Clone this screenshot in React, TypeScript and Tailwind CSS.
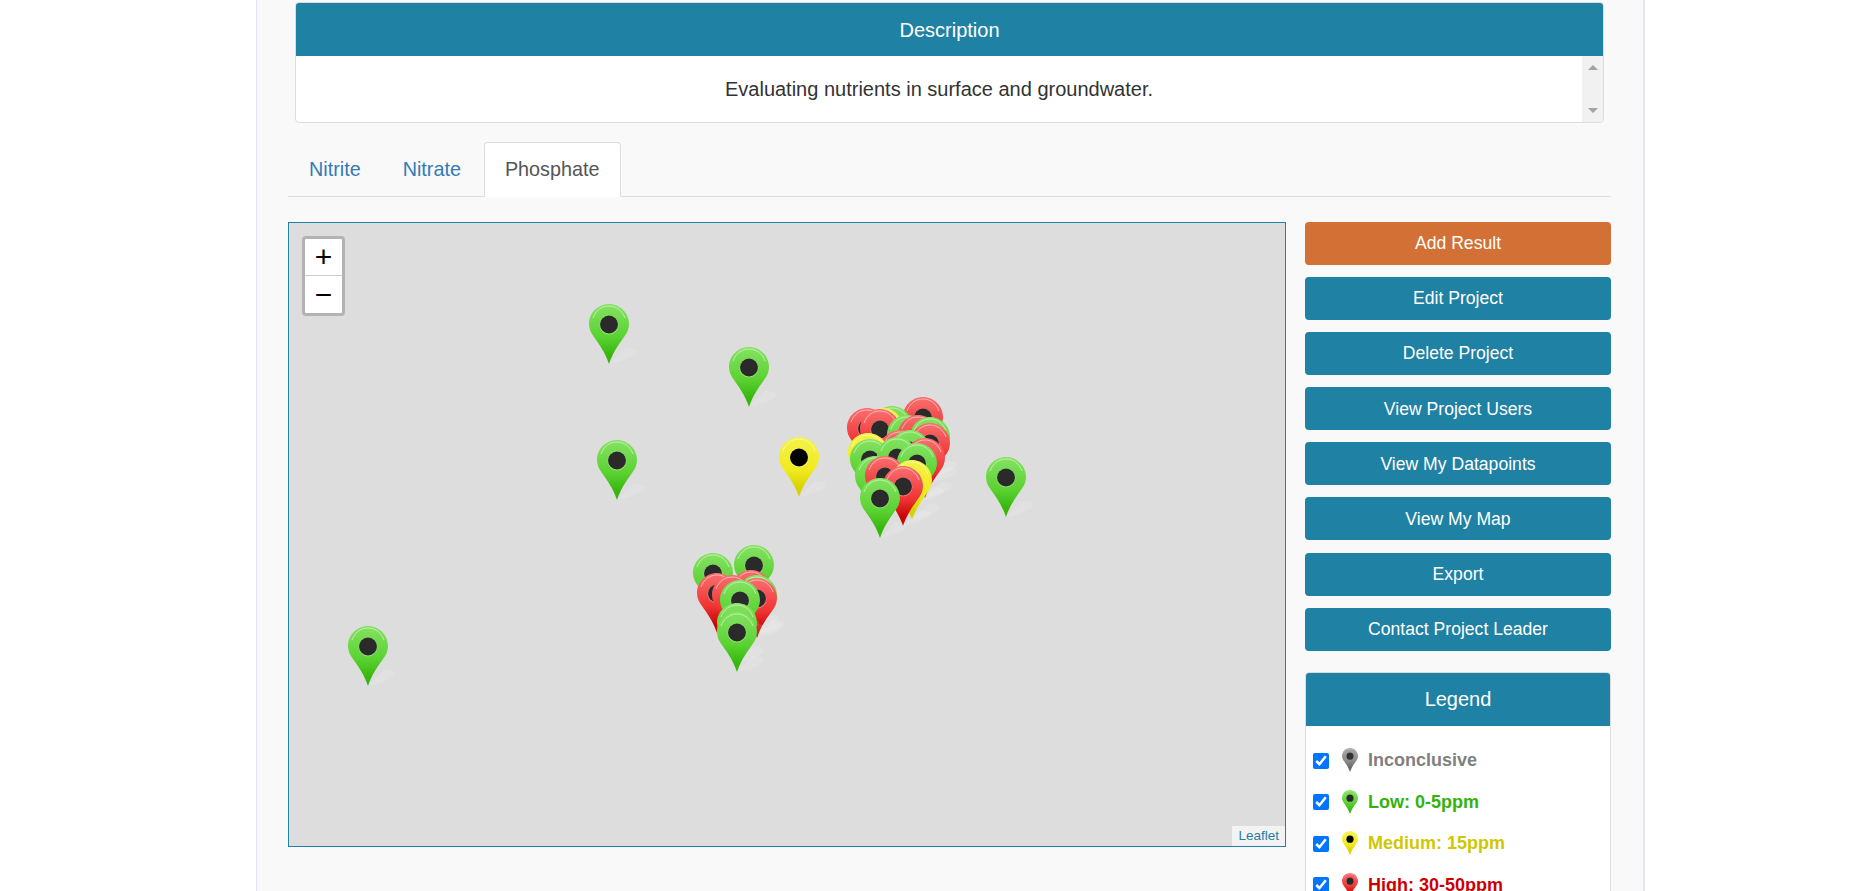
import { useId } from 'react';

type PinColor = 'green' | 'red' | 'yellow' | 'gray';

const pinColors: Record<PinColor, { top: string; mid: string; bottom: string; rim: string; hole: string }> = {
  green: { top: '#86e264', mid: '#5ad231', bottom: '#38b60e', rim: '#d6f5c8', hole: '#2a2a2a' },
  red: { top: '#f97070', mid: '#f03434', bottom: '#c90505', rim: '#fbd2d2', hole: '#2a2a2a' },
  yellow: { top: '#f5f24a', mid: '#efeb1e', bottom: '#d8d200', rim: '#fbfac0', hole: '#000000' },
  gray: { top: '#a8a8a8', mid: '#8a8a8a', bottom: '#666666', rim: '#d8d8d8', hole: '#333333' },
};

function Pin({ color, size = 40, shadow = false }: { color: PinColor; size?: number; shadow?: boolean }) {
  const id = useId();
  const c = pinColors[color];
  const w = shadow ? 66 : 40;
  return (
    <svg width={(size * w) / 40} height={(size * 62) / 40} viewBox={`0 0 ${w} 62`} className="block">
      <defs>
        <linearGradient id={id} x1="0" y1="0" x2="0" y2="1">
          <stop offset="0" stopColor={c.top} />
          <stop offset="0.55" stopColor={c.mid} />
          <stop offset="0.85" stopColor={c.bottom} />
        </linearGradient>
      </defs>
      {shadow && <path d="M20 60 L36 44 C42 44 50 46 46 50 C40 55 30 58 20 60Z" fill="#ffffff" opacity="0.14" />}
      <path
        d="M20 0C31 0 40 9 40 20C40 25 38 29 35 33C30 40 24 48 20 60C16 48 10 40 5 33C2 29 0 25 0 20C0 9 9 0 20 0Z"
        fill={`url(#${id})`}
      />
      <path d="M4 14C7 6 13 2 20 2C27 2 33 6 36 14" fill="none" stroke={c.rim} strokeWidth="1" opacity="0.75" />
      <circle cx="20" cy="21" r="9.5" fill="#ffffff" opacity="0.3" />
      <circle cx="20" cy="20.5" r="9" fill={c.hole} />
    </svg>
  );
}

// cx = centre of the pin, top = top of the pin, in page pixels
const pins: { color: PinColor; cx: number; top: number }[] = [
  { color: 'green', cx: 609, top: 304 },
  { color: 'green', cx: 749, top: 347 },
  { color: 'green', cx: 617, top: 440 },
  { color: 'yellow', cx: 799, top: 437 },
  { color: 'green', cx: 1006, top: 457 },
  { color: 'green', cx: 368, top: 626 },
  { color: 'red', cx: 923, top: 397 },
  { color: 'green', cx: 892, top: 406 },
  { color: 'yellow', cx: 883, top: 408 },
  { color: 'red', cx: 867, top: 408 },
  { color: 'red', cx: 880, top: 409 },
  { color: 'green', cx: 907, top: 415 },
  { color: 'red', cx: 918, top: 415 },
  { color: 'green', cx: 930, top: 417 },
  { color: 'red', cx: 930, top: 423 },
  { color: 'red', cx: 900, top: 430 },
  { color: 'green', cx: 910, top: 430 },
  { color: 'yellow', cx: 868, top: 433 },
  { color: 'green', cx: 870, top: 439 },
  { color: 'green', cx: 897, top: 437 },
  { color: 'red', cx: 925, top: 438 },
  { color: 'green', cx: 917, top: 443 },
  { color: 'green', cx: 875, top: 456 },
  { color: 'red', cx: 885, top: 456 },
  { color: 'yellow', cx: 912, top: 460 },
  { color: 'red', cx: 903, top: 466 },
  { color: 'green', cx: 880, top: 478 },
  { color: 'green', cx: 713, top: 553 },
  { color: 'green', cx: 754, top: 545 },
  { color: 'red', cx: 751, top: 570 },
  { color: 'red', cx: 717, top: 573 },
  { color: 'green', cx: 757, top: 575 },
  { color: 'red', cx: 757, top: 578 },
  { color: 'red', cx: 732, top: 575 },
  { color: 'green', cx: 740, top: 580 },
  { color: 'green', cx: 737, top: 603 },
  { color: 'green', cx: 737, top: 612 },
];

const buttons = [
  'Edit Project',
  'Delete Project',
  'View Project Users',
  'View My Datapoints',
  'View My Map',
  'Export',
  'Contact Project Leader',
];

const legend: { color: PinColor; label: string; text: string }[] = [
  { color: 'gray', label: 'Inconclusive', text: 'text-[#808080]' },
  { color: 'green', label: 'Low: 0-5ppm', text: 'text-[#33b30a]' },
  { color: 'yellow', label: 'Medium: 15ppm', text: 'text-[#cfc800]' },
  { color: 'red', label: 'High: 30-50ppm', text: 'text-[#cc0000]' },
];

export default function App() {
  return (
    <div className="h-screen overflow-hidden bg-white font-['Liberation_Sans',Arial,sans-serif] text-[#333]">
      <div className="ml-[256px] h-full w-[1389px] border-l border-r-2 border-[#e4e4f0] bg-[#f9f9f9] pl-[31px] pr-[32px] pt-[2px]">
        {/* Description */}
        <div className="mx-[7px] overflow-hidden rounded border border-[#ddd] bg-white">
          <div className="flex h-[53px] items-center justify-center bg-[#1f81a3] text-[20px] text-white">Description</div>
          <div className="flex h-[66px]">
            <div className="flex flex-1 items-center justify-center text-[20px]">Evaluating nutrients in surface and groundwater.</div>
            <div className="flex w-[21px] flex-col items-center justify-between bg-[#f1f1f1] py-[9px]">
              <div className="h-0 w-0 border-x-[5px] border-b-[5px] border-x-transparent border-b-[#a3a3a3]" />
              <div className="h-0 w-0 border-x-[5px] border-t-[5px] border-x-transparent border-t-[#a3a3a3]" />
            </div>
          </div>
        </div>

        {/* Tabs */}
        <div className="mt-[19px] flex border-b border-[#ddd] text-[19.8px] leading-[26px]">
          <a className="border border-transparent px-5 py-[13px] text-[#337ab7]">Nitrite</a>
          <a className="border border-transparent px-5 py-[13px] text-[#337ab7]">Nitrate</a>
          <a className="-mb-px ml-[2px] rounded-t border border-[#ddd] border-b-white bg-white px-5 py-[13px] text-[#555]">Phosphate</a>
        </div>

        <div className="mt-[25px] flex items-start gap-[19px]">
          {/* Map */}
          <div className="relative h-[625px] w-[998px] overflow-hidden border border-[#1f81a3] bg-[#ddd]">
            {pins.map((p, i) => (
              <div key={i} className="absolute" style={{ left: p.cx - 20 - 289, top: p.top - 223 }}>
                <Pin color={p.color} shadow />
              </div>
            ))}
            <div className="absolute left-[13px] top-[13px] w-[43px] rounded border-[3px] border-[#b3b3b3] bg-white text-black">
              <div className="flex h-[37px] items-center justify-center border-b border-[#ccc] text-[30px] leading-none">+</div>
              <div className="flex h-[37px] items-center justify-center text-[30px] leading-none">−</div>
            </div>
            <div className="absolute bottom-0 right-0 flex h-5 items-center bg-[#f3f3f3] px-[6px] text-[13.5px] text-[#1f81a3]">Leaflet</div>
          </div>

          {/* Sidebar */}
          <div className="w-[306px]">
            <div className="flex flex-col gap-[12.1px]">
              <div className="flex h-[43px] items-center justify-center rounded bg-[#d27035] text-[17.6px] text-white">Add Result</div>
              {buttons.map((b) => (
                <div key={b} className="flex h-[43px] items-center justify-center rounded bg-[#1f81a3] text-[17.6px] text-white">
                  {b}
                </div>
              ))}
            </div>

            <div className="mt-[21.3px] overflow-hidden rounded border border-[#ddd] bg-white">
              <div className="flex h-[53px] items-center justify-center bg-[#1f81a3] text-[20px] text-white">Legend</div>
              <div className="flex flex-col gap-[17.5px] px-[7px] pt-[22.6px] pb-4">
                {legend.map((l) => (
                  <label key={l.label} className={`flex h-6 items-center font-bold ${l.text}`}>
                    <input type="checkbox" defaultChecked className="h-4 w-4" />
                    <span className="ml-[13px] mr-[10px]">
                      <Pin color={l.color} size={16} />
                    </span>
                    <span className="text-[18px]">{l.label}</span>
                  </label>
                ))}
              </div>
            </div>
          </div>
        </div>
      </div>
    </div>
  );
}
